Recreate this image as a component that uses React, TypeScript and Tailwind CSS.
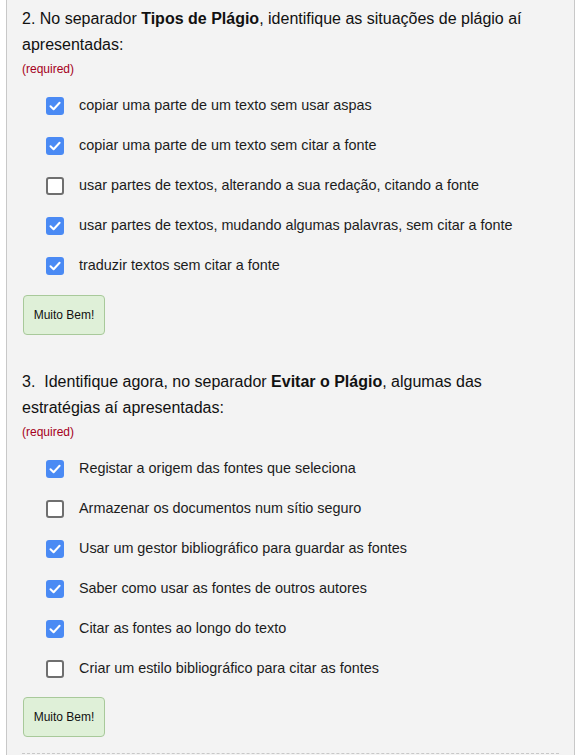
import React from 'react';

type Option = { label: string; checked: boolean };

const q2: Option[] = [
  { label: 'copiar uma parte de um texto sem usar aspas', checked: true },
  { label: 'copiar uma parte de um texto sem citar a fonte', checked: true },
  { label: 'usar partes de textos, alterando a sua redação, citando a fonte', checked: false },
  { label: 'usar partes de textos, mudando algumas palavras, sem citar a fonte', checked: true },
  { label: 'traduzir textos sem citar a fonte', checked: true },
];

const q3: Option[] = [
  { label: 'Registar a origem das fontes que seleciona', checked: true },
  { label: 'Armazenar os documentos num sítio seguro', checked: false },
  { label: 'Usar um gestor bibliográfico para guardar as fontes', checked: true },
  { label: 'Saber como usar as fontes de outros autores', checked: true },
  { label: 'Citar as fontes ao longo do texto', checked: true },
  { label: 'Criar um estilo bibliográfico para citar as fontes', checked: false },
];

function Box({ checked }: { checked: boolean }) {
  if (checked) {
    return (
      <span className="flex h-[18px] w-[18px] shrink-0 items-center justify-center rounded-[3px] bg-[#4a8af4]">
        <svg width="14" height="14" viewBox="0 0 14 14" fill="none">
          <path d="M2.5 7.2 L5.6 10.2 L11.6 3.8" stroke="#fff" strokeWidth="2" strokeLinecap="round" strokeLinejoin="round" />
        </svg>
      </span>
    );
  }
  return <span className="h-[18px] w-[18px] shrink-0 rounded-[3px] border-2 border-[#6f6f6f] bg-white" />;
}

function Options({ items }: { items: Option[] }) {
  return (
    <ul className="pl-[24px]">
      {items.map((o) => (
        <li key={o.label} className="flex h-[40px] items-center gap-[15px]">
          <Box checked={o.checked} />
          <span className="text-[14.4px] text-[#1c1c1c]">{o.label}</span>
        </li>
      ))}
    </ul>
  );
}

function Feedback() {
  return (
    <div className="pl-px">
      <div className="flex h-[40px] w-[82px] items-center justify-center rounded-[4px] border border-[#a8c99a] bg-[#dff0d8] text-[12px] text-[#111]">
        Muito Bem!
      </div>
    </div>
  );
}

function Required() {
  return <p className="mt-[3px] text-[12px] leading-[16px] text-[#a50021]">(required)</p>;
}

export default function App() {
  return (
    <div className="min-h-screen bg-white px-[6px]" style={{ fontFamily: '"Liberation Sans", Arial, sans-serif' }}>
      <div className="border-x border-[#c8c8c8] bg-[#f3f3f3] px-[15px] pt-[6px] pb-[1px]">
        <section>
          <h2 className="text-[16px] leading-[26px] text-[#111]">
            2. No separador <b>Tipos de Plágio</b>, identifique as situações de plágio aí apresentadas:
          </h2>
          <Required />
          <div className="mt-[9px]">
            <Options items={q2} />
          </div>
          <div className="mt-[9px]">
            <Feedback />
          </div>
        </section>

        <section className="mt-[34px]">
          <h2 className="text-[16px] leading-[26px] text-[#111]">
            3.&nbsp; Identifique agora, no separador <b>Evitar o Plágio</b>, algumas das estratégias aí apresentadas:
          </h2>
          <Required />
          <div className="mt-[9px]">
            <Options items={q3} />
          </div>
          <div className="mt-[8px]">
            <Feedback />
          </div>
        </section>

        <div className="mt-[16px] border-t border-dashed border-[#c8c8c8]" />
        <div className="h-[40px]" />
      </div>
    </div>
  );
}
